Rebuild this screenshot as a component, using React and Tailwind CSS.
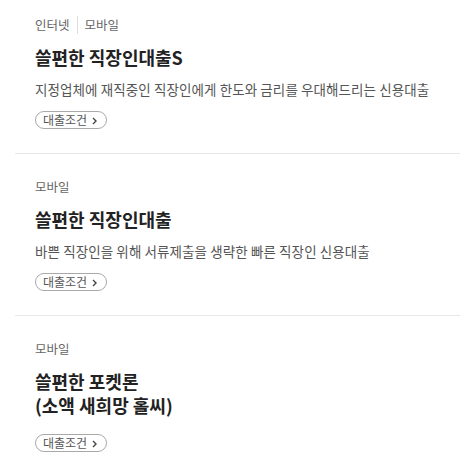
const font = { fontFamily: '"Noto Sans CJK KR", "Noto Sans", sans-serif' };

function Btn() {
  return (
    <div className="flex">
      <span className="flex h-[18px] items-center gap-[5px] rounded-full border border-[#a9a9a9] pl-[7px] pr-[9px] text-[12px] leading-none text-[#555]">
        <span>대출조건</span>
        <svg width="5" height="8" viewBox="0 0 5 8" className="mt-[1px]">
          <path d="M1 1 L4 4 L1 7" fill="none" stroke="#444" strokeWidth="1.4" />
        </svg>
      </span>
    </div>
  );
}

function Item({ tags, title, desc, first, last }) {
  return (
    <div className={`${first ? 'pt-[15px]' : 'pt-[23px]'} ${last ? 'pb-[12px]' : 'pb-[24px] border-b border-[#e8e8e8]'} pl-[20px]`}>
      <div className="flex h-[20px] items-center text-[12.5px] text-[#666]">
        {tags.map((t, i) => (
          <span key={i} className="flex items-center">
            {i > 0 && <span className="mx-[7px] h-[18px] w-px bg-[#ddd]" />}
            <span>{t}</span>
          </span>
        ))}
      </div>
      <div className="mt-[10px] text-[18px] font-bold leading-[24px] text-[#222]">{title}</div>
      {desc && (
        <div className="mt-[10px] text-[13.5px] leading-[20px] tracking-[0.1px] text-[#555]">{desc}</div>
      )}
      <div className={desc ? 'mt-[12px]' : 'mt-[17px]'}>
        <Btn />
      </div>
    </div>
  );
}

export default function App() {
  return (
    <div className="min-h-[462px] w-[460px] bg-white" style={font}>
      <div className="ml-[15px]">
        <Item
          first
          tags={['인터넷', '모바일']}
          title="쓸편한 직장인대출S"
          desc="지정업체에 재직중인 직장인에게 한도와 금리를 우대해드리는 신용대출"
        />
        <Item
          tags={['모바일']}
          title="쓸편한 직장인대출"
          desc="바쁜 직장인을 위해 서류제출을 생략한 빠른 직장인 신용대출"
        />
        <Item
          last
          tags={['모바일']}
          title={<>쓸편한 포켓론<br />(소액 새희망 홀씨)</>}
        />
      </div>
    </div>
  );
}
